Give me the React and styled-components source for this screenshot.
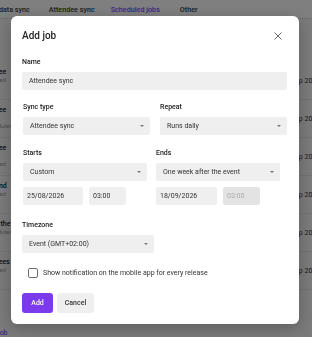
import React from 'react';
import styled, { createGlobalStyle } from 'styled-components';

const GlobalStyle = createGlobalStyle`
  * { box-sizing: border-box; }
  html, body {
    margin: 0;
    padding: 0;
  }
  body {
    width: 312px;
    height: 337px;
    overflow: hidden;
    font-family: Roboto, "Liberation Sans", sans-serif;
    background: #f7f7f8;
  }
`;

const tabs = ['Attendee data sync', 'Attendee sync', 'Scheduled jobs', 'Other'];

const jobs = [
  { title: 'Attendee', lines: [], status: 'Scheduled', date: 'Sep 2026, 03:00' },
  { title: 'Attendee', lines: ['Event -'], status: 'Unscheduled', date: 'Sep 2026, 03:00' },
  { title: 'Attendee', lines: ['Before'], status: 'Scheduled', date: 'Sep 2026, 03:00' },
  { title: 'Weekend', lines: [], status: 'Scheduled', date: 'Sep 2026, 03:00' },
  { title: 'Before the', lines: [], status: 'Unscheduled', date: 'Sep 2026, 03:00' },
  { title: 'Attendees', lines: [], status: 'Scheduled', date: 'Sep 2026, 03:00' },
];

const App = () => {
  return (
    <>
      <GlobalStyle />
      <Page>
        <TabBar>
          {tabs.map((t) => (
            <Tab key={t} $active={t === 'Scheduled jobs'}>{t}</Tab>
          ))}
        </TabBar>
        <JobList>
          {jobs.map((j, i) => (
            <JobRow key={i}>
              <JobText>
                <JobTitle>{j.title}</JobTitle>
                {j.lines.map((l) => <JobLine key={l}>{l}</JobLine>)}
                <JobStatus>{j.status}</JobStatus>
              </JobText>
              <JobDate>{j.date}</JobDate>
            </JobRow>
          ))}
          <AddLink>+ Add job</AddLink>
        </JobList>
      </Page>

      <Overlay>
        <Dialog>
          <Header>
            <Title>Add job</Title>
            <CloseButton aria-label="Close">
              <svg width="8" height="8" viewBox="0 0 8 8">
                <path d="M0.5 0.5 L7.5 7.5 M7.5 0.5 L0.5 7.5" stroke="#6b6b6b" strokeWidth="1" />
              </svg>
            </CloseButton>
          </Header>

          <Field $mt={16}>
            <Label>Name</Label>
            <TextInput readOnly defaultValue="Attendee sync" />
          </Field>

          <TwoCols $mt={13} $cols="127px 127px" $gap={10}>
            <Field>
              <Label>Sync type</Label>
              <Select>Attendee sync<Arrow /></Select>
            </Field>
            <Field>
              <Label>Repeat</Label>
              <Select>Runs daily<Arrow /></Select>
            </Field>
          </TwoCols>

          <TwoCols $mt={14} $cols="124px 124px" $gap={9}>
            <Field>
              <Label>Starts</Label>
              <Select>Custom<Arrow /></Select>
              <DateRow>
                <DateInput $w={60} readOnly defaultValue="25/08/2026" />
                <DateInput $w={37} readOnly defaultValue="03:00" />
              </DateRow>
            </Field>
            <Field>
              <Label>Ends</Label>
              <Select>One week after the event<Arrow /></Select>
              <DateRow>
                <DateInput $w={61} readOnly defaultValue="18/09/2026" />
                <DateInput $w={37} disabled defaultValue="03:00" />
              </DateRow>
            </Field>
          </TwoCols>

          <Field $mt={16}>
            <Label>Timezone</Label>
            <Select $w={132}>Event (GMT+02:00)<Arrow /></Select>
          </Field>

          <CheckRow>
            <Box />
            <span>Show notification on the mobile app for every release</span>
          </CheckRow>

          <Actions>
            <Button $primary>Add</Button>
            <Button>Cancel</Button>
          </Actions>
        </Dialog>
      </Overlay>
    </>
  );
};

const Page = styled.div`
  width: 312px;
  height: 337px;
  overflow: hidden;
  background: #f7f7f8;
`;

const TabBar = styled.div`
  height: 19px;
  display: flex;
  align-items: center;
  margin-left: -37px;
  background: #ffffff;
  border-bottom: 1px solid #e2e2e2;
`;

const Tab = styled.div`
  padding: 0 8px;
  font-size: 7.2px;
  font-weight: 500;
  white-space: nowrap;
  color: ${(p) => (p.$active ? '#7c4dff' : '#3a3a3a')};

  &:first-child {
    padding-left: 5px;
    padding-right: 11px;
  }

  &:last-child {
    margin-left: 4px;
  }
`;

const JobList = styled.div`
  margin-left: -40px;
  width: 420px;
  padding-top: 43px;
`;

const JobRow = styled.div`
  display: grid;
  grid-template-columns: 313px auto;
  align-items: start;
  height: 38px;
  padding: 6px 0 0 18px;
  border-bottom: 1px solid #e6e6e6;
`;

const JobText = styled.div`
  display: flex;
  flex-direction: column;
  font-size: 7px;
  line-height: 8px;
`;

const JobTitle = styled.span`
  font-weight: 500;
  color: #222;
`;

const JobLine = styled.span`
  color: #333;
`;

const JobStatus = styled.span`
  color: #999;
  font-size: 6px;
`;

const JobDate = styled.span`
  align-self: center;
  margin-bottom: 6px;
  font-size: 7px;
  color: #333;
  white-space: nowrap;
`;

const AddLink = styled.div`
  padding: 39px 0 0 18px;
  font-size: 7px;
  font-weight: 500;
  color: #7c4dff;
`;

const Overlay = styled.div`
  position: fixed;
  inset: 0;
  background: rgba(0, 0, 0, 0.5);
  display: flex;
  align-items: flex-start;
  padding: 16px 0 0 11px;
`;

const Dialog = styled.div`
  width: 288px;
  background: #ffffff;
  border-radius: 6px;
  box-shadow: 0 4px 16px rgba(0, 0, 0, 0.25);
  padding: 14px 12px 11px 11px;
  display: flex;
  flex-direction: column;
`;

const Header = styled.div`
  display: flex;
  align-items: center;
  justify-content: space-between;
  height: 12px;
`;

const Title = styled.h2`
  margin: 0;
  font-size: 10px;
  line-height: 12px;
  font-weight: 500;
  color: #1f1f1f;
`;

const CloseButton = styled.button`
  width: 16px;
  height: 16px;
  margin-right: 1px;
  padding: 0;
  border: none;
  background: transparent;
  display: flex;
  align-items: center;
  justify-content: center;
`;

const Field = styled.div`
  display: flex;
  flex-direction: column;
  margin-top: ${(p) => p.$mt || 0}px;
`;

const TwoCols = styled.div`
  display: grid;
  grid-template-columns: ${(p) => p.$cols};
  column-gap: ${(p) => p.$gap}px;
  margin-top: ${(p) => p.$mt || 0}px;
  padding-left: 1px;
`;

const Label = styled.div`
  font-size: 7px;
  line-height: 9px;
  font-weight: 500;
  color: #222;
  margin-bottom: 5px;
`;

const TextInput = styled.input`
  height: 18px;
  width: 100%;
  border: none;
  outline: none;
  border-radius: 2px;
  background: #efefef;
  padding: 0 7px;
  font: inherit;
  font-size: 7px;
  color: #333;
`;

const Select = styled.div`
  height: 18px;
  width: ${(p) => (p.$w ? `${p.$w}px` : '100%')};
  border-radius: 2px;
  background: #efefef;
  padding: 0 6px 0 7px;
  display: flex;
  align-items: center;
  justify-content: space-between;
  font-size: 7px;
  color: #333;
`;

const Arrow = styled.span`
  width: 0;
  height: 0;
  border-left: 2.5px solid transparent;
  border-right: 2.5px solid transparent;
  border-top: 2.5px solid #777;
`;

const DateRow = styled.div`
  display: flex;
  gap: 6px;
  margin-top: 6px;
`;

const DateInput = styled.input`
  width: ${(p) => p.$w}px;
  height: 18px;
  border: none;
  outline: none;
  border-radius: 2px;
  background: #efefef;
  padding: 0 4px;
  font: inherit;
  font-size: 7px;
  color: #333;

  &:disabled {
    background: #e3e3e3;
    color: #a8a8a8;
  }
`;

const CheckRow = styled.label`
  display: flex;
  align-items: center;
  gap: 5px;
  margin-top: 15px;
  padding-left: 6px;
  font-size: 7px;
  color: #333;
  height: 10px;
`;

const Box = styled.span`
  width: 10px;
  height: 10px;
  border: 1px solid #6e6e6e;
  border-radius: 2px;
  background: #fff;
`;

const Actions = styled.div`
  display: flex;
  gap: 4px;
  margin-top: 15px;
`;

const Button = styled.button`
  height: 20px;
  padding: 0 ${(p) => (p.$primary ? 8 : 7)}px;
  min-width: ${(p) => (p.$primary ? 31 : 37)}px;
  border: none;
  border-radius: 3px;
  font: inherit;
  font-size: 7px;
  font-weight: 500;
  background: ${(p) => (p.$primary ? '#7c3aed' : '#efefef')};
  color: ${(p) => (p.$primary ? '#ffffff' : '#333')};
`;

export default App;
